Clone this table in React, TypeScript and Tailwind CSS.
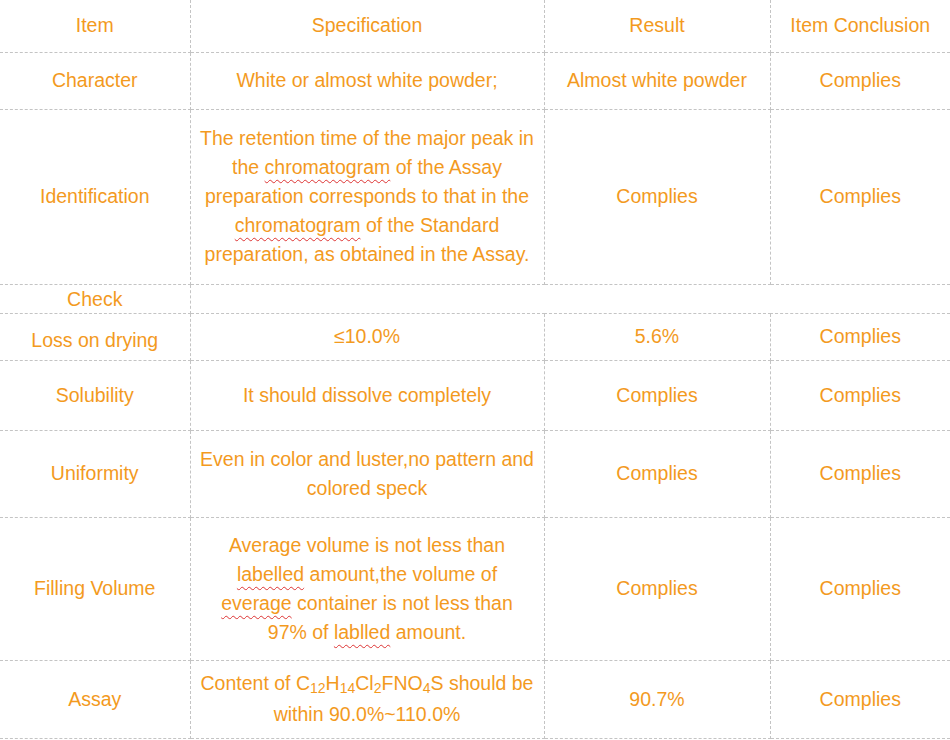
import type { ReactNode } from 'react';

const cell = 'border-b border-r border-dashed border-[#c4c4c4] text-center align-middle px-[6px]';
const last = 'border-b border-dashed border-[#c4c4c4] text-center align-middle px-[6px]';

function Typo({ children }: { children: ReactNode }) {
  return (
    <span className="underline decoration-wavy decoration-[#d33] decoration-1 underline-offset-[5px] [text-decoration-skip-ink:none]">
      {children}
    </span>
  );
}

function Sub({ children }: { children: ReactNode }) {
  return <span className="relative top-[3px] text-[14px]">{children}</span>;
}

type Row = { h: number; item: ReactNode; spec: ReactNode; result: ReactNode; concl: ReactNode; itemCls?: string };

const rows: Row[] = [
  { h: 57, item: 'Character', spec: 'White or almost white powder;', result: 'Almost white powder', concl: 'Complies' },
  {
    h: 175,
    item: 'Identification',
    spec: (
      <>
        The retention time of the major peak in the <Typo>chromatogram</Typo> of the Assay preparation corresponds to
        that in the <Typo>chromatogram</Typo> of the Standard preparation, as obtained in the Assay.
      </>
    ),
    result: 'Complies',
    concl: 'Complies',
  },
];

const rows2: Row[] = [
  { h: 47, item: 'Loss on drying', spec: '≤10.0%', result: '5.6%', concl: 'Complies', itemCls: 'pt-[8px]' },
  { h: 70, item: 'Solubility', spec: 'It should dissolve completely', result: 'Complies', concl: 'Complies' },
  {
    h: 87,
    item: 'Uniformity',
    spec: 'Even in color and luster,no pattern and colored speck',
    result: 'Complies',
    concl: 'Complies',
  },
  {
    h: 143,
    item: 'Filling Volume',
    spec: (
      <>
        Average volume is not less than
        <br />
        <Typo>labelled</Typo> amount,the volume of
        <br />
        <Typo>everage</Typo> container is not less than
        <br />
        97% of <Typo>lablled</Typo> amount.
      </>
    ),
    result: 'Complies',
    concl: 'Complies',
  },
  {
    h: 78,
    item: 'Assay',
    spec: (
      <>
        Content of C<Sub>12</Sub>H<Sub>14</Sub>Cl<Sub>2</Sub>FNO<Sub>4</Sub>S should be within 90.0%~110.0%
      </>
    ),
    result: '90.7%',
    concl: 'Complies',
  },
];

function DataRow({ r }: { r: Row }) {
  return (
    <tr style={{ height: r.h }}>
      <td className={`${cell} ${r.itemCls ?? ''}`}>{r.item}</td>
      <td className={cell}>{r.spec}</td>
      <td className={cell}>{r.result}</td>
      <td className={last}>{r.concl}</td>
    </tr>
  );
}

export default function App() {
  return (
    <div className="w-[950px] h-[740px] bg-white overflow-hidden font-['Liberation_Sans',Arial,sans-serif] text-[19.5px] leading-[29px] text-[#f39a1e]">
      <table className="w-[950px] table-fixed border-collapse">
        <colgroup>
          <col className="w-[190px]" />
          <col className="w-[354px]" />
          <col className="w-[226px]" />
          <col className="w-[180px]" />
        </colgroup>
        <tbody>
          <tr className="h-[52px]">
            <td className={cell}>Item</td>
            <td className={cell}>Specification</td>
            <td className={cell}>Result</td>
            <td className={last}>Item Conclusion</td>
          </tr>
          {rows.map((r, i) => (
            <DataRow key={i} r={r} />
          ))}
          <tr className="h-[29px] leading-[26px]">
            <td className={cell}>Check</td>
            <td colSpan={3} className={last}></td>
          </tr>
          {rows2.map((r, i) => (
            <DataRow key={i} r={r} />
          ))}
        </tbody>
      </table>
    </div>
  );
}
